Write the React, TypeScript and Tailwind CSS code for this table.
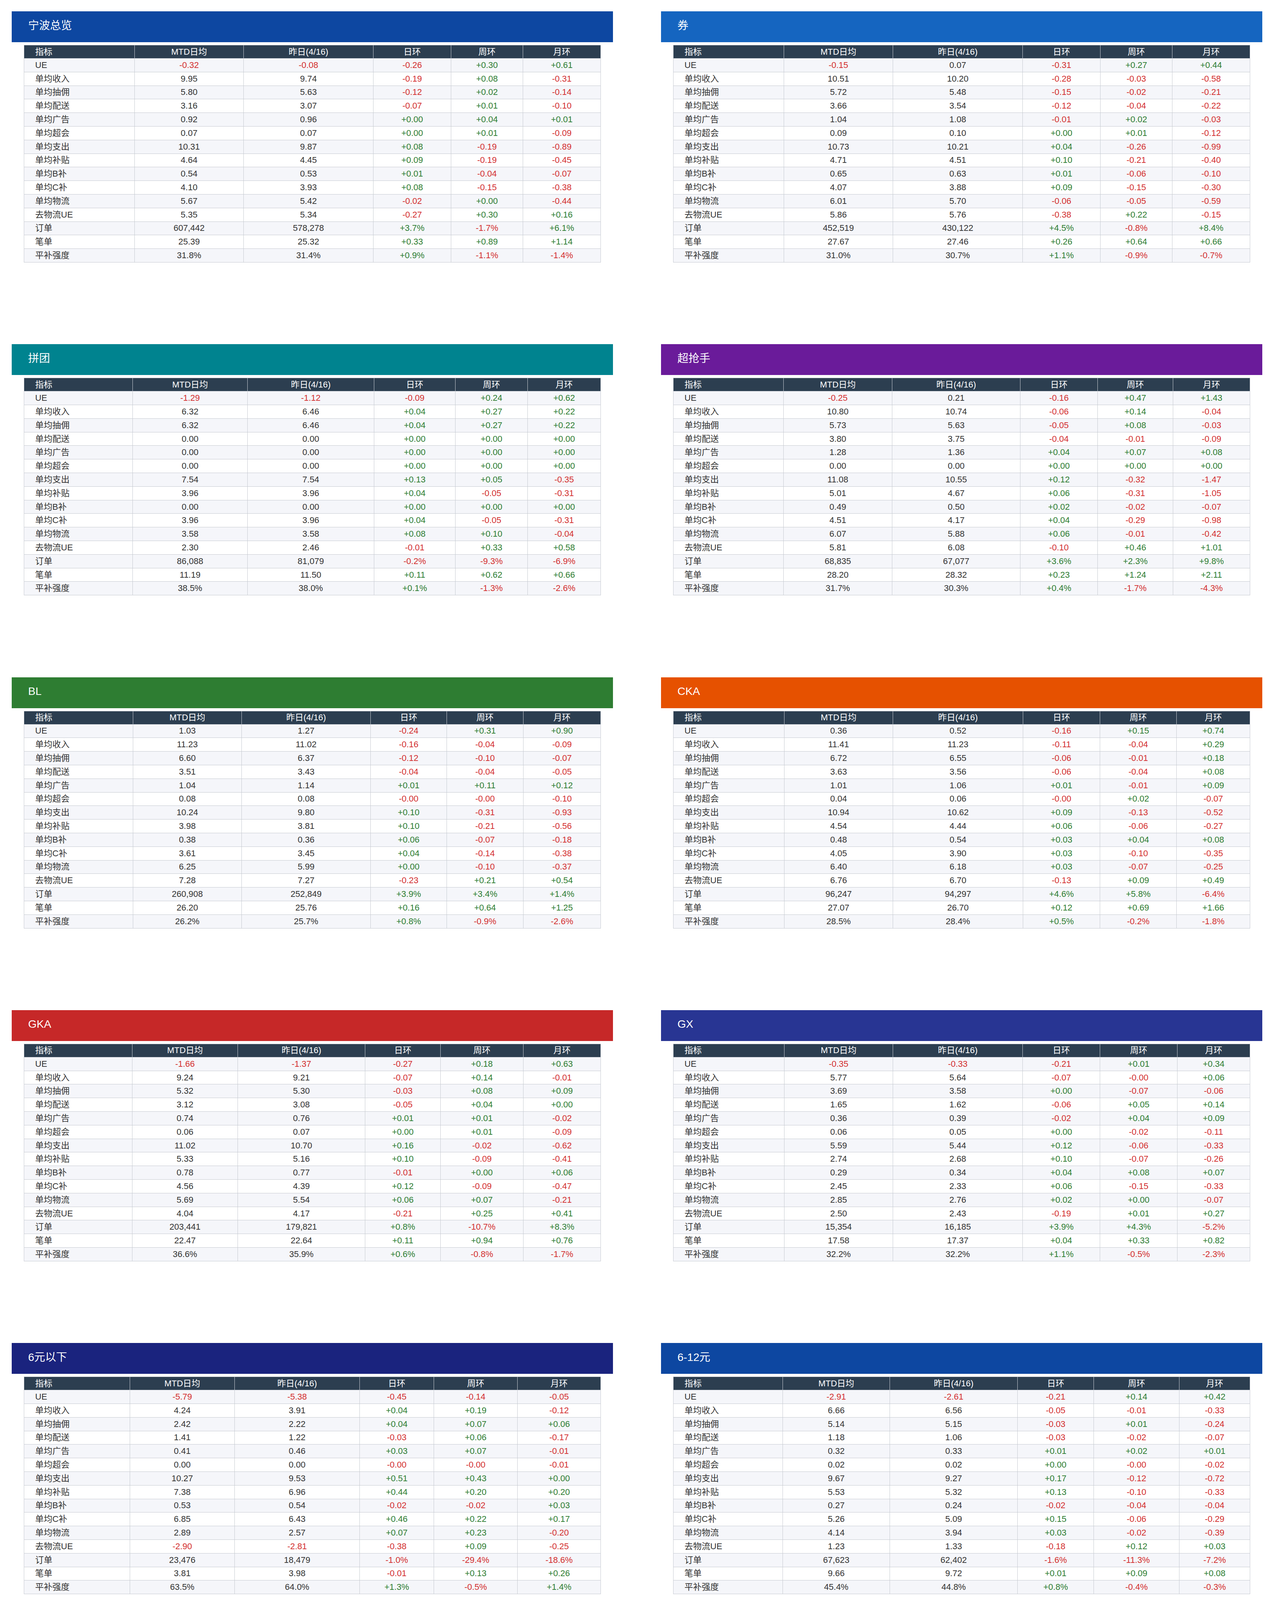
import React from 'react';

type Card = {
  title: string;
  bar: string;
  cols: string[];
  data: string;
};

const metrics = [
  'UE',
  '单均收入',
  '单均抽佣',
  '单均配送',
  '单均广告',
  '单均超会',
  '单均支出',
  '单均补贴',
  '单均B补',
  '单均C补',
  '单均物流',
  '去物流UE',
  '订单',
  '笔单',
  '平补强度',
];

const headers = ['指标', 'MTD日均', '昨日(4/16)', '日环', '周环', '月环'];

// one line per metric: MTD, yesterday, day / week / month change
const cards: Card[] = [
  {
    title: '宁波总览',
    bar: 'bg-[#0d47a1]',
    cols: ['w-[283px]', 'w-[279px]', 'w-[332px]', 'w-[199px]', 'w-[184px]', 'w-[199px]'],
    data: `
      -0.32 -0.08 -0.26 +0.30 +0.61
      9.95 9.74 -0.19 +0.08 -0.31
      5.80 5.63 -0.12 +0.02 -0.14
      3.16 3.07 -0.07 +0.01 -0.10
      0.92 0.96 +0.00 +0.04 +0.01
      0.07 0.07 +0.00 +0.01 -0.09
      10.31 9.87 +0.08 -0.19 -0.89
      4.64 4.45 +0.09 -0.19 -0.45
      0.54 0.53 +0.01 -0.04 -0.07
      4.10 3.93 +0.08 -0.15 -0.38
      5.67 5.42 -0.02 +0.00 -0.44
      5.35 5.34 -0.27 +0.30 +0.16
      607,442 578,278 +3.7% -1.7% +6.1%
      25.39 25.32 +0.33 +0.89 +1.14
      31.8% 31.4% +0.9% -1.1% -1.4%`,
  },
  {
    title: '券',
    bar: 'bg-[#1565c0]',
    cols: ['w-[283px]', 'w-[279px]', 'w-[332px]', 'w-[199px]', 'w-[184px]', 'w-[199px]'],
    data: `
      -0.15 0.07 -0.31 +0.27 +0.44
      10.51 10.20 -0.28 -0.03 -0.58
      5.72 5.48 -0.15 -0.02 -0.21
      3.66 3.54 -0.12 -0.04 -0.22
      1.04 1.08 -0.01 +0.02 -0.03
      0.09 0.10 +0.00 +0.01 -0.12
      10.73 10.21 +0.04 -0.26 -0.99
      4.71 4.51 +0.10 -0.21 -0.40
      0.65 0.63 +0.01 -0.06 -0.10
      4.07 3.88 +0.09 -0.15 -0.30
      6.01 5.70 -0.06 -0.05 -0.59
      5.86 5.76 -0.38 +0.22 -0.15
      452,519 430,122 +4.5% -0.8% +8.4%
      27.67 27.46 +0.26 +0.64 +0.66
      31.0% 30.7% +1.1% -0.9% -0.7%`,
  },
  {
    title: '拼团',
    bar: 'bg-[#00838f]',
    cols: ['w-[278px]', 'w-[294px]', 'w-[324px]', 'w-[208px]', 'w-[185px]', 'w-[187px]'],
    data: `
      -1.29 -1.12 -0.09 +0.24 +0.62
      6.32 6.46 +0.04 +0.27 +0.22
      6.32 6.46 +0.04 +0.27 +0.22
      0.00 0.00 +0.00 +0.00 +0.00
      0.00 0.00 +0.00 +0.00 +0.00
      0.00 0.00 +0.00 +0.00 +0.00
      7.54 7.54 +0.13 +0.05 -0.35
      3.96 3.96 +0.04 -0.05 -0.31
      0.00 0.00 +0.00 +0.00 +0.00
      3.96 3.96 +0.04 -0.05 -0.31
      3.58 3.58 +0.08 +0.10 -0.04
      2.30 2.46 -0.01 +0.33 +0.58
      86,088 81,079 -0.2% -9.3% -6.9%
      11.19 11.50 +0.11 +0.62 +0.66
      38.5% 38.0% +0.1% -1.3% -2.6%`,
  },
  {
    title: '超抢手',
    bar: 'bg-[#6a1b9a]',
    cols: ['w-[282px]', 'w-[278px]', 'w-[328px]', 'w-[198px]', 'w-[193px]', 'w-[197px]'],
    data: `
      -0.25 0.21 -0.16 +0.47 +1.43
      10.80 10.74 -0.06 +0.14 -0.04
      5.73 5.63 -0.05 +0.08 -0.03
      3.80 3.75 -0.04 -0.01 -0.09
      1.28 1.36 +0.04 +0.07 +0.08
      0.00 0.00 +0.00 +0.00 +0.00
      11.08 10.55 +0.12 -0.32 -1.47
      5.01 4.67 +0.06 -0.31 -1.05
      0.49 0.50 +0.02 -0.02 -0.07
      4.51 4.17 +0.04 -0.29 -0.98
      6.07 5.88 +0.06 -0.01 -0.42
      5.81 6.08 -0.10 +0.46 +1.01
      68,835 67,077 +3.6% +2.3% +9.8%
      28.20 28.32 +0.23 +1.24 +2.11
      31.7% 30.3% +0.4% -1.7% -4.3%`,
  },
  {
    title: 'BL',
    bar: 'bg-[#2e7d32]',
    cols: ['w-[279px]', 'w-[278px]', 'w-[330px]', 'w-[195px]', 'w-[196px]', 'w-[198px]'],
    data: `
      1.03 1.27 -0.24 +0.31 +0.90
      11.23 11.02 -0.16 -0.04 -0.09
      6.60 6.37 -0.12 -0.10 -0.07
      3.51 3.43 -0.04 -0.04 -0.05
      1.04 1.14 +0.01 +0.11 +0.12
      0.08 0.08 -0.00 -0.00 -0.10
      10.24 9.80 +0.10 -0.31 -0.93
      3.98 3.81 +0.10 -0.21 -0.56
      0.38 0.36 +0.06 -0.07 -0.18
      3.61 3.45 +0.04 -0.14 -0.38
      6.25 5.99 +0.00 -0.10 -0.37
      7.28 7.27 -0.23 +0.21 +0.54
      260,908 252,849 +3.9% +3.4% +1.4%
      26.20 25.76 +0.16 +0.64 +1.25
      26.2% 25.7% +0.8% -0.9% -2.6%`,
  },
  {
    title: 'CKA',
    bar: 'bg-[#e65100]',
    cols: ['w-[284px]', 'w-[278px]', 'w-[333px]', 'w-[197px]', 'w-[196px]', 'w-[188px]'],
    data: `
      0.36 0.52 -0.16 +0.15 +0.74
      11.41 11.23 -0.11 -0.04 +0.29
      6.72 6.55 -0.06 -0.01 +0.18
      3.63 3.56 -0.06 -0.04 +0.08
      1.01 1.06 +0.01 -0.01 +0.09
      0.04 0.06 -0.00 +0.02 -0.07
      10.94 10.62 +0.09 -0.13 -0.52
      4.54 4.44 +0.06 -0.06 -0.27
      0.48 0.54 +0.03 +0.04 +0.08
      4.05 3.90 +0.03 -0.10 -0.35
      6.40 6.18 +0.03 -0.07 -0.25
      6.76 6.70 -0.13 +0.09 +0.49
      96,247 94,297 +4.6% +5.8% -6.4%
      27.07 26.70 +0.12 +0.69 +1.66
      28.5% 28.4% +0.5% -0.2% -1.8%`,
  },
  {
    title: 'GKA',
    bar: 'bg-[#c62828]',
    cols: ['w-[277px]', 'w-[270px]', 'w-[326px]', 'w-[193px]', 'w-[212px]', 'w-[198px]'],
    data: `
      -1.66 -1.37 -0.27 +0.18 +0.63
      9.24 9.21 -0.07 +0.14 -0.01
      5.32 5.30 -0.03 +0.08 +0.09
      3.12 3.08 -0.05 +0.04 +0.00
      0.74 0.76 +0.01 +0.01 -0.02
      0.06 0.07 +0.00 +0.01 -0.09
      11.02 10.70 +0.16 -0.02 -0.62
      5.33 5.16 +0.10 -0.09 -0.41
      0.78 0.77 -0.01 +0.00 +0.06
      4.56 4.39 +0.12 -0.09 -0.47
      5.69 5.54 +0.06 +0.07 -0.21
      4.04 4.17 -0.21 +0.25 +0.41
      203,441 179,821 +0.8% -10.7% +8.3%
      22.47 22.64 +0.11 +0.94 +0.76
      36.6% 35.9% +0.6% -0.8% -1.7%`,
  },
  {
    title: 'GX',
    bar: 'bg-[#283593]',
    cols: ['w-[284px]', 'w-[278px]', 'w-[332px]', 'w-[198px]', 'w-[198px]', 'w-[186px]'],
    data: `
      -0.35 -0.33 -0.21 +0.01 +0.34
      5.77 5.64 -0.07 -0.00 +0.06
      3.69 3.58 +0.00 -0.07 -0.06
      1.65 1.62 -0.06 +0.05 +0.14
      0.36 0.39 -0.02 +0.04 +0.09
      0.06 0.05 +0.00 -0.02 -0.11
      5.59 5.44 +0.12 -0.06 -0.33
      2.74 2.68 +0.10 -0.07 -0.26
      0.29 0.34 +0.04 +0.08 +0.07
      2.45 2.33 +0.06 -0.15 -0.33
      2.85 2.76 +0.02 +0.00 -0.07
      2.50 2.43 -0.19 +0.01 +0.27
      15,354 16,185 +3.9% +4.3% -5.2%
      17.58 17.37 +0.04 +0.33 +0.82
      32.2% 32.2% +1.1% -0.5% -2.3%`,
  },
  {
    title: '6元以下',
    bar: 'bg-[#1a237e]',
    cols: ['w-[271px]', 'w-[268px]', 'w-[320px]', 'w-[190px]', 'w-[214px]', 'w-[213px]'],
    data: `
      -5.79 -5.38 -0.45 -0.14 -0.05
      4.24 3.91 +0.04 +0.19 -0.12
      2.42 2.22 +0.04 +0.07 +0.06
      1.41 1.22 -0.03 +0.06 -0.17
      0.41 0.46 +0.03 +0.07 -0.01
      0.00 0.00 -0.00 -0.00 -0.01
      10.27 9.53 +0.51 +0.43 +0.00
      7.38 6.96 +0.44 +0.20 +0.20
      0.53 0.54 -0.02 -0.02 +0.03
      6.85 6.43 +0.46 +0.22 +0.17
      2.89 2.57 +0.07 +0.23 -0.20
      -2.90 -2.81 -0.38 +0.09 -0.25
      23,476 18,479 -1.0% -29.4% -18.6%
      3.81 3.98 -0.01 +0.13 +0.26
      63.5% 64.0% +1.3% -0.5% +1.4%`,
  },
  {
    title: '6-12元',
    bar: 'bg-[#0d47a1]',
    cols: ['w-[280px]', 'w-[274px]', 'w-[327px]', 'w-[195px]', 'w-[219px]', 'w-[181px]'],
    data: `
      -2.91 -2.61 -0.21 +0.14 +0.42
      6.66 6.56 -0.05 -0.01 -0.33
      5.14 5.15 -0.03 +0.01 -0.24
      1.18 1.06 -0.03 -0.02 -0.07
      0.32 0.33 +0.01 +0.02 +0.01
      0.02 0.02 +0.00 -0.00 -0.02
      9.67 9.27 +0.17 -0.12 -0.72
      5.53 5.32 +0.13 -0.10 -0.33
      0.27 0.24 -0.02 -0.04 -0.04
      5.26 5.09 +0.15 -0.06 -0.29
      4.14 3.94 +0.03 -0.02 -0.39
      1.23 1.33 -0.18 +0.12 +0.03
      67,623 62,402 -1.6% -11.3% -7.2%
      9.66 9.72 +0.01 +0.09 +0.08
      45.4% 44.8% +0.8% -0.4% -0.3%`,
  },
  {
    title: '12-15元',
    bar: 'bg-[#01579b]',
    cols: ['w-[283px]', 'w-[279px]', 'w-[332px]', 'w-[199px]', 'w-[184px]', 'w-[199px]'],
    data: `
      -1.33 -1.10 -0.18 +0.13 +0.62
      7.87 7.69 -0.11 -0.04 -0.60
      5.11 4.99 -0.10 +0.01 -0.35
      2.11 2.01 -0.03 -0.07 -0.16
      0.56 0.61 +0.01 +0.02 +0.00
      0.08 0.09 +0.01 +0.01 -0.09
      9.38 8.94 +0.07 -0.18 -1.21
      4.14 4.00 +0.08 -0.09 -0.56
      0.36 0.32 +0.00 -0.07 -0.04
      3.78 3.68 +0.07 -0.02 -0.51
      5.24 4.94 -0.00 -0.09 -0.65
      3.90 3.84 -0.19 +0.04 -0.02
      75,028 72,216 +2.7% -5.7% +8.3%
      13.79 13.78 +0.01 -0.02 +0.03
      34.5% 34.2% +0.7% -0.4% -1.3%`,
  },
  {
    title: '15-20元',
    bar: 'bg-[#006064]',
    cols: ['w-[280px]', 'w-[278px]', 'w-[327px]', 'w-[199px]', 'w-[196px]', 'w-[196px]'],
    data: `
      -0.53 -0.33 -0.23 +0.15 +0.43
      8.74 8.64 -0.12 -0.13 -0.34
      4.44 4.35 -0.06 -0.07 -0.10
      3.32 3.23 -0.06 -0.10 -0.13
      0.89 0.95 -0.00 +0.04 +0.01
      0.09 0.10 -0.00 +0.01 -0.11
      9.48 9.14 +0.12 -0.28 -0.79
      3.56 3.47 +0.09 -0.15 -0.32
      0.49 0.47 +0.02 -0.06 -0.05
      3.07 3.00 +0.07 -0.08 -0.27
      5.92 5.67 +0.03 -0.13 -0.46
      5.39 5.34 -0.20 +0.02 -0.03
      134,390 131,568 +4.4% +0.2% +5.7%
      17.58 17.56 +0.01 -0.03 +0.01
      28.9% 28.7% +0.8% -0.6% -1.0%`,
  },
  {
    title: '20-25元',
    bar: 'bg-[#004d40]',
    cols: ['w-[279px]', 'w-[278px]', 'w-[330px]', 'w-[195px]', 'w-[196px]', 'w-[198px]'],
    data: `
      -0.01 0.21 -0.26 +0.20 +0.53
      10.02 9.80 -0.30 -0.13 -0.50
      4.95 4.79 -0.15 -0.09 -0.24
      3.95 3.82 -0.14 -0.08 -0.18
      1.05 1.10 -0.01 +0.02 +0.01
      0.07 0.08 -0.00 +0.02 -0.09
      10.19 9.74 -0.02 -0.31 -1.01
      3.81 3.69 +0.07 -0.21 -0.45
      0.57 0.57 +0.04 -0.05 -0.08
      3.24 3.13 +0.03 -0.16 -0.36
      6.37 6.05 -0.09 -0.10 -0.56
      6.36 6.26 -0.35 +0.10 -0.03
      102,487 100,722 +5.0% +1.6% +9.2%
      22.51 22.49 -0.01 -0.01 -0.03
      27.6% 27.4% +0.9% -0.8% -1.3%`,
  },
  {
    title: '25-30元',
    bar: 'bg-[#1b5e20]',
    cols: ['w-[280px]', 'w-[278px]', 'w-[327px]', 'w-[199px]', 'w-[196px]', 'w-[196px]'],
    data: `
      0.30 0.52 -0.20 +0.19 +0.57
      10.82 10.55 -0.22 -0.18 -0.67
      5.64 5.48 -0.11 -0.10 -0.32
      4.03 3.90 -0.10 -0.07 -0.22
      1.08 1.11 -0.01 -0.01 -0.04
      0.06 0.06 -0.00 +0.00 -0.10
      10.63 10.16 -0.00 -0.31 -1.15
      4.29 4.14 +0.01 -0.22 -0.57
      0.63 0.63 +0.00 -0.05 -0.09
      3.66 3.51 +0.01 -0.17 -0.49
      6.33 6.02 -0.02 -0.08 -0.58
      6.64 6.55 -0.21 +0.11 -0.01
      67,496 65,634 +3.7% +4.2% +8.1%
      27.35 27.34 -0.00 -0.00 +0.03
      28.4% 28.2% +0.5% -0.7% -1.4%`,
  },
  {
    title: '大于30元',
    bar: 'bg-[#33691e]',
    cols: ['w-[272px]', 'w-[269px]', 'w-[320px]', 'w-[192px]', 'w-[192px]', 'w-[231px]'],
    data: `
      2.11 2.21 -0.52 +0.25 +0.49
      14.40 13.97 -0.53 -0.14 -0.64
      9.15 8.80 -0.33 -0.08 -0.29
      3.84 3.74 -0.17 -0.04 -0.19
      1.35 1.37 -0.03 -0.02 -0.05
      0.06 0.06 +0.00 +0.00 -0.11
      11.92 11.46 -0.02 -0.29 -1.04
      5.86 5.70 +0.12 -0.25 -0.56
      0.75 0.76 -0.00 -0.03 -0.16
      5.10 4.94 +0.12 -0.22 -0.40
      6.06 5.76 -0.14 -0.04 -0.48
      8.17 7.97 -0.66 +0.21 +0.00
      136,942 127,257 +6.1% +4.3% +14.5%
      52.08 51.84 +0.34 +0.36 +1.31
      28.9% 29.0% +1.2% -0.7% -1.0%`,
  },
];

const parseRows = (data: string) =>
  data
    .trim()
    .split('\n')
    .map((line) => line.trim().split(/\s+/));

// negative values are red everywhere, positive changes are green
const toneOf = (value: string, isChange: boolean) => {
  if (value.startsWith('-')) return 'text-[#d32f2f]';
  if (isChange && value.startsWith('+')) return 'text-[#2e7d32]';
  return 'text-[#333333]';
};

const MetricCard: React.FC<{ card: Card }> = ({ card }) => {
  const rows = parseRows(card.data);

  return (
    <section className="h-[643px]">
      <div className={`${card.bar} flex h-[79px] items-center pb-[6px] pl-[42px] text-[28px] leading-none text-white`}>
        {card.title}
      </div>
      <div className="px-[31px] pt-[7px]">
        <table className="w-full table-fixed border-collapse border border-[#c6cad1] text-[22px] leading-none">
          <colgroup>
            {card.cols.map((c, i) => (
              <col key={i} className={c} />
            ))}
          </colgroup>
          <thead>
            <tr className="h-[34px] bg-[#2c3e50] text-white">
              {headers.map((h, i) => (
                <th
                  key={h}
                  className={`border border-[#c6cad1] font-normal ${i === 0 ? 'pl-[28px] text-left' : 'text-center'}`}
                >
                  {h}
                </th>
              ))}
            </tr>
          </thead>
          <tbody>
            {metrics.map((m, r) => (
              <tr key={m} className={`h-[34.8px] ${r % 2 === 0 ? 'bg-[#f5f6fa]' : 'bg-white'}`}>
                <td className="border border-[#c6cad1] pl-[28px] text-left text-[#333333]">{m}</td>
                {rows[r].map((v, i) => (
                  <td key={i} className={`border border-[#c6cad1] text-center ${toneOf(v, i >= 2)}`}>
                    {v}
                  </td>
                ))}
              </tr>
            ))}
          </tbody>
        </table>
      </div>
    </section>
  );
};

export default function App() {
  return (
    <div className="grid h-[6681px] grid-cols-2 content-start gap-x-[123px] gap-y-[209.3px] overflow-hidden bg-white px-[30px] pt-[29px] font-['Liberation_Sans','Noto_Sans_CJK_SC',sans-serif]">
      {cards.map((card) => (
        <MetricCard key={card.title} card={card} />
      ))}
    </div>
  );
}
